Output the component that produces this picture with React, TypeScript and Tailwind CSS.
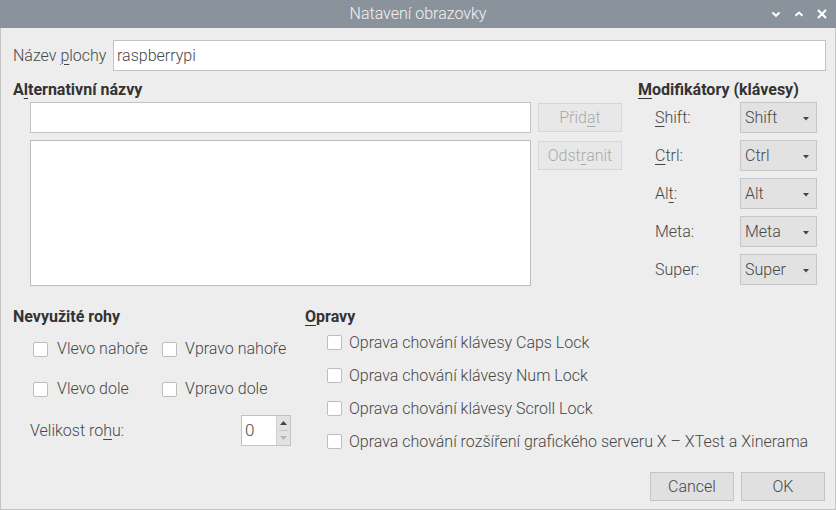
import React from "react"

function U({ children }: { children: React.ReactNode }) {
  return <span className="underline decoration-1 underline-offset-[3px]">{children}</span>
}

function TitleBar() {
  return (
    <div className="h-[28px] bg-[#8a939b] flex items-center relative shrink-0">
      <div className="flex-1 text-center text-[16px] text-[#f2f2f2] leading-[28px]">
        Natavení obrazovky
      </div>
      <div className="absolute right-[9px] top-0 h-[28px] flex items-center gap-[13px]">
        <svg width="10" height="10" viewBox="0 0 10 10">
          <path d="M1.5 3.5 L5 6.8 L8.5 3.5" stroke="#fff" strokeWidth="2" fill="none" />
        </svg>
        <svg width="10" height="10" viewBox="0 0 10 10">
          <path d="M1.5 6.8 L5 3.5 L8.5 6.8" stroke="#fff" strokeWidth="2" fill="none" />
        </svg>
        <svg width="10" height="10" viewBox="0 0 10 10">
          <path d="M1 1 L9 9 M9 1 L1 9" stroke="#fff" strokeWidth="2.2" fill="none" />
        </svg>
      </div>
    </div>
  )
}

function Checkbox() {
  return <div className="w-[15px] h-[15px] bg-white border border-[#bdbdbd] rounded-[2px] shrink-0" />
}

function Combo({ value }: { value: string }) {
  return (
    <div className="w-[77px] h-[31px] bg-[#e2e2e2] border border-[#c6c6c6] flex items-center pl-[4px] pr-[7px]">
      <span className="flex-1">{value}</span>
      <svg width="6" height="4" viewBox="0 0 6 4" className="mt-[3px]">
        <path d="M0 0 H6 L3 3.5 Z" fill="#444" />
      </svg>
    </div>
  )
}

function Heading({ children }: { children: React.ReactNode }) {
  return <div className="h-[22px] leading-[20px] font-bold text-[#333]">{children}</div>
}

const modifiers: { label: React.ReactNode; value: string }[] = [
  { label: <><U>S</U>hift:</>, value: "Shift" },
  { label: <><U>C</U>trl:</>, value: "Ctrl" },
  { label: <>Al<U>t</U>:</>, value: "Alt" },
  { label: <>Meta:</>, value: "Meta" },
  { label: <>Super:</>, value: "Super" },
]

const fixes = [
  "Oprava chování klávesy Caps Lock",
  "Oprava chování klávesy Num Lock",
  "Oprava chování klávesy Scroll Lock",
  "Oprava chování rozšíření grafického serveru X – XTest a Xinerama",
]

export default function App() {
  return (
    <div className="w-[836px] h-[510px] flex flex-col font-['Roboto',sans-serif] text-[16px] font-light text-[#474747]">
      <TitleBar />
      <div className="flex-1 bg-[#ededed] border-x border-b border-[#c4c4c4] flex flex-col pl-[12px] pt-[12px]">
        {/* desktop name */}
        <div className="flex items-center h-[31px]">
          <div className="w-[100px]">
            Název <U>p</U>lochy
          </div>
          <div className="w-[713px] h-[31px] bg-white border border-[#c2c2c2] flex items-center pl-[3px]">
            raspberrypi
          </div>
        </div>

        {/* alternative names + modifiers */}
        <div className="flex mt-[9px]">
          <div className="w-[609px]">
            <Heading>
              A<U>l</U>ternativní názvy
            </Heading>
            <div className="flex pl-[17px] gap-[7px]">
              <div className="w-[501px]">
                <div className="h-[31px] bg-white border border-[#c2c2c2]" />
                <div className="h-[146px] mt-[7px] bg-white border border-[#bdbdbd]" />
              </div>
              <div className="w-[84px] text-[#a9a9a9]">
                <div className="h-[29px] mt-[1px] bg-[#e8e8e8] border border-[#d6d6d6] flex items-center justify-center">
                  Přid<U>a</U>t
                </div>
                <div className="h-[29px] mt-[9px] bg-[#e8e8e8] border border-[#d6d6d6] flex items-center justify-center">
                  Odst<U>r</U>anit
                </div>
              </div>
            </div>
          </div>
          <div className="ml-[16px]">
            <Heading>
              <U>M</U>odifikátory (klávesy)
            </Heading>
            <div className="flex flex-col gap-[7px]">
              {modifiers.map((m) => (
                <div key={m.value} className="flex items-center">
                  <div className="w-[102px] pl-[17px]">{m.label}</div>
                  <Combo value={m.value} />
                </div>
              ))}
            </div>
          </div>
        </div>

        {/* corners + fixes */}
        <div className="flex mt-[21px]">
          <div className="w-[292px]">
            <div className="h-[20px] leading-[20px] font-bold text-[#333]">Nevyužité rohy</div>
            <div className="grid grid-cols-[129px_auto] pl-[20px] mt-[2px]">
              {["Vlevo nahoře", "Vpravo nahoře", "Vlevo dole", "Vpravo dole"].map((t, i) => (
                <div key={t} className={`h-[40px] flex items-center ${i % 2 ? "gap-[8px]" : "gap-[9px]"}`}>
                  <Checkbox />
                  <span>{t}</span>
                </div>
              ))}
            </div>
            <div className="flex items-center h-[31px] mt-[6px] pl-[17px]">
              <div className="w-[211px]">
                Velikost ro<U>h</U>u:
              </div>
              <div className="flex h-[31px] border border-[#c2c2c2]">
                <div className="w-[34px] bg-white flex items-center pl-[3px] text-[17px]">0</div>
                <div className="w-[14px] bg-[#e2e2e2] border-l border-[#d0d0d0] flex flex-col">
                  <div className="flex-1 flex items-center justify-center">
                    <svg width="7" height="4" viewBox="0 0 7 4">
                      <path d="M0 4 L3.5 0 L7 4 Z" fill="#444" />
                    </svg>
                  </div>
                  <div className="h-px mx-[2px] bg-[#c8c8c8]" />
                  <div className="flex-1 flex items-center justify-center">
                    <svg width="7" height="4" viewBox="0 0 7 4">
                      <path d="M0 0 H7 L3.5 4 Z" fill="#b5b5b5" />
                    </svg>
                  </div>
                </div>
              </div>
            </div>
          </div>
          <div>
            <div className="h-[20px] leading-[20px] font-bold text-[#333]">
              <U>O</U>pravy
            </div>
            <div className="pl-[22px] -mt-[1px]">
              {fixes.map((f) => (
                <div key={f} className="h-[33px] flex items-center gap-[7px]">
                  <Checkbox />
                  <span>{f}</span>
                </div>
              ))}
            </div>
          </div>
        </div>

        {/* footer */}
        <div className="mt-auto mb-[8px] flex justify-end gap-[7px] pr-[10px]">
          <div className="w-[84px] h-[29px] bg-[#e0e0e0] border border-[#c4c4c4] flex items-center justify-center">
            Cancel
          </div>
          <div className="w-[84px] h-[29px] bg-[#e0e0e0] border border-[#c4c4c4] flex items-center justify-center">
            OK
          </div>
        </div>
      </div>
    </div>
  )
}
